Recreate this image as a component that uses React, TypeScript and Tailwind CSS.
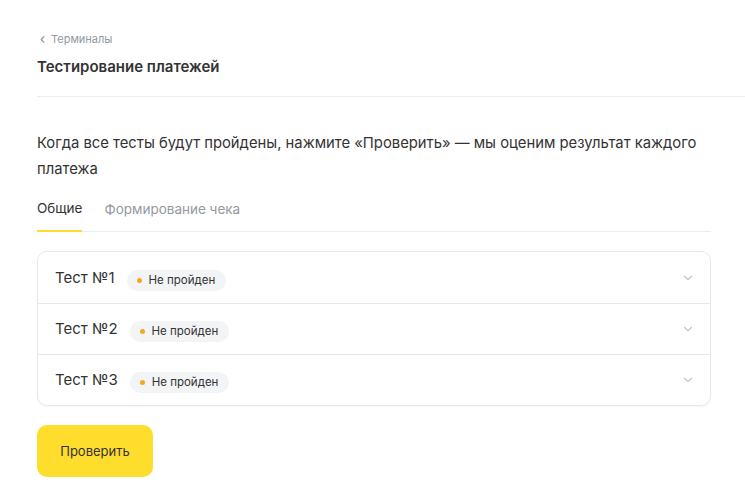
import { ChevronDown, ChevronLeft } from "lucide-react";

const tests = ["Тест №1", "Тест №2", "Тест №3"];

function StatusBadge() {
  return (
    <span className="inline-flex h-[21px] items-center gap-[7px] rounded-full bg-[#f3f4f6] pl-[10px] pr-[11px] text-[11.5px] text-[#333]">
      <span className="h-[5px] w-[5px] rounded-full bg-[#f5a623]" />
      Не пройден
    </span>
  );
}

export default function App() {
  return (
    <div className="min-h-[503px] bg-white font-['Inter',sans-serif] text-[#333]">
      <div className="pl-[37px] pt-[31px]">
        <a className="flex items-center gap-[3px] text-[11px] text-[#9299a2]">
          <ChevronLeft className="h-[11px] w-[11px]" strokeWidth={2.5} />
          Терминалы
        </a>
        <h1 className="mt-[8px] text-[15px] font-semibold text-[#333]">
          Тестирование платежей
        </h1>
        <div className="mt-[18px] border-b border-[#ececec]" />
      </div>

      <div className="box-content w-[674px] pl-[37px] pt-[33px]">
        <p className="text-[14.8px] leading-[26px] text-[#333]">
          Когда все тесты будут пройдены, нажмите «Проверить» — мы оценим
          результат каждого платежа
        </p>

        <div className="mt-[16px] flex gap-[22px] border-b border-[#ececec] text-[13.5px]">
          <button className="-mb-px border-b-2 border-[#ffdd2d] pb-[12px] text-[#333]">
            Общие
          </button>
          <button className="pb-[12px] text-[#9299a2]">Формирование чека</button>
        </div>

        <div className="mt-[19px] rounded-[10px] border border-[#e7e8ea] shadow-[0_1px_2px_rgba(0,0,0,0.04)]">
          {tests.map((t, i) => (
            <div
              key={t}
              className={`flex h-[51px] items-center pl-[17px] pr-[15px] ${
                i > 0 ? "border-t border-[#e7e8ea]" : ""
              }`}
            >
              <span className="text-[15px] text-[#333]">{t}</span>
              <span className="ml-[12px]">
                <StatusBadge />
              </span>
              <ChevronDown
                className="ml-auto h-[14px] w-[14px] text-[#c4c7cc]"
                strokeWidth={2}
              />
            </div>
          ))}
        </div>

        <button className="mt-[19px] h-[52px] w-[116px] rounded-[10px] bg-[#ffdd2d] text-[13px] text-[#333]">
          Проверить
        </button>
      </div>
    </div>
  );
}
